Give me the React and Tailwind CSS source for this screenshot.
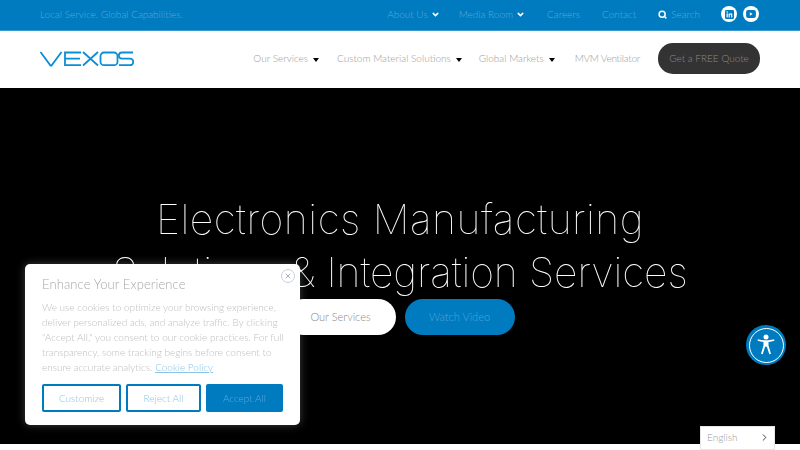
import React from 'react';
import { ChevronDown, ChevronRight, Search, X } from 'lucide-react';

function Caret() {
  return <span className="ml-[5px] mt-[2px] inline-block border-x-[3px] border-t-[4px] border-x-transparent border-t-black" />;
}

function Logo() {
  return (
    <svg width="94" height="16" viewBox="0 0 94 16" fill="none" stroke="#0a8fd6" strokeWidth="1.8">
      <path d="M0.5 1l10 13.5h1L21.5 1" />
      <path d="M41 1.5H25v12.7h16M25 7.7h15" />
      <path d="M43 1l15 13.5M58 1L43 14.5" />
      <rect x="60.5" y="1.5" width="17" height="12.7" rx="3.5" />
      <path d="M93 1.5H82a3 3 0 0 0 0 6.2h8a3.2 3.2 0 0 1 0 6.5H79" />
    </svg>
  );
}

function SocialIcon({ children }) {
  return <span className="flex h-4 w-4 items-center justify-center rounded-full bg-white">{children}</span>;
}

export default function App() {
  return (
    <div className="relative h-[450px] w-[800px] overflow-hidden bg-white font-['Lato',sans-serif] font-light">
      {/* top bar */}
      <div className="flex h-[31px] items-center justify-between border-b border-[#3a9bd2] bg-[#007bc0] pb-[2px] pl-10 pr-[41px] text-[10px] text-[#5aa9d8]">
        <span>Local Service. Global Capabilities.</span>
        <div className="flex items-center">
          <span className="flex items-center">About Us <ChevronDown size={9} strokeWidth={4} className="ml-[3px] text-white" /></span>
          <span className="ml-[19px] flex items-center">Media Room <ChevronDown size={9} strokeWidth={4} className="ml-[3px] text-white" /></span>
          <span className="ml-[22px]">Careers</span>
          <span className="ml-[22px]">Contact</span>
          <span className="ml-[22px] flex items-center"><Search size={9} strokeWidth={4} className="mr-[4px] text-white" />Search</span>
          <span className="ml-[21px]">
            <SocialIcon>
              <svg width="9" height="9" viewBox="0 0 10 10">
                <rect width="10" height="10" rx="1.5" fill="#007bc0" />
                <rect x="1.7" y="3.8" width="1.4" height="4.4" fill="white" />
                <circle cx="2.4" cy="2.3" r="0.85" fill="white" />
                <path d="M4 3.8h1.3v.6c.3-.5.8-.7 1.3-.7 1 0 1.5.6 1.5 1.8v2.7H6.8V5.8c0-.6-.2-.9-.7-.9-.5 0-.8.4-.8 1v2.3H4z" fill="white" />
              </svg>
            </SocialIcon>
          </span>
          <span className="ml-[6px]">
            <SocialIcon>
              <svg width="10" height="8" viewBox="0 0 11 9">
                <rect width="11" height="9" rx="2.2" fill="#007bc0" />
                <path d="M4.2 2.5l3 2-3 2z" fill="white" />
              </svg>
            </SocialIcon>
          </span>
        </div>
      </div>

      {/* main nav */}
      <div className="flex h-[57px] items-center justify-between pb-[2px] pl-10 pr-10">
        <Logo />
        <div className="flex items-center text-[10px] text-[#9b9b9b]">
          <span className="flex items-center">Our Services <Caret /></span>
          <span className="ml-[18px] flex items-center">Custom Material Solutions <Caret /></span>
          <span className="ml-[17px] flex items-center">Global Markets <Caret /></span>
          <span className="ml-[20px] tracking-[-0.25px]">MVM Ventilator</span>
          <span className="ml-[18px] flex h-[31px] w-[102px] items-center justify-center rounded-[15px] bg-[#333333] text-[#8a8a8a]">Get a FREE Quote</span>
        </div>
      </div>

      {/* hero */}
      <div className="flex h-[356px] flex-col items-center bg-black pt-[105px]">
        <h1 className="text-center font-['Inter',sans-serif] text-[41px] font-thin leading-[53px] tracking-[-0.1px] text-white [transform:translateZ(0)]">
          <span className="tracking-[0.5px]">Electronics Manufacturing</span><br />Solutions &amp; Integration Services
        </h1>
        <div className="flex gap-[9px]">
          <span className="flex h-9 w-[110px] items-center justify-center rounded-[18px] bg-white text-[11px] text-[#8a8a8a]">Our Services</span>
          <span className="flex h-9 w-[110px] items-center justify-center rounded-[18px] bg-[#007bc0] text-[11px] text-[#4ea3d6]">Watch Video</span>
        </div>
      </div>

      {/* cookie dialog */}
      <div className="absolute left-[25px] top-[264px] h-[161px] w-[275px] rounded-[5px] bg-white px-[17px] pt-[12px] shadow-[0_0_8px_rgba(255,255,255,0.25)]">
        <button className="absolute right-[5px] top-[5px] flex h-[14px] w-[14px] items-center justify-center rounded-full border border-[#c9cfe0] text-[#7a80a8]"><X size={8} /></button>
        <div className="text-[13px] leading-[16px] tracking-[0.1px] text-[#a8a8a8]">Enhance Your Experience</div>
        <p className="mt-[8px] whitespace-nowrap text-[10px] leading-[15px] text-[#bdbdbd]">
          We use cookies to optimize your browsing experience,<br />
          deliver personalized ads, and analyze traffic. By clicking<br />
          "Accept All," you consent to our cookie practices. For full<br />
          transparency, some tracking begins before consent to<br />
          ensure accurate analytics. <span className="text-[#8cc4e6] underline">Cookie Policy</span>
        </p>
        <div className="absolute bottom-[13px] left-[17px] flex gap-[5px] text-[10px]">
          <button className="h-[28px] w-[79px] rounded-[2px] border-2 border-[#007bc0] text-[#8cc4e6]">Customize</button>
          <button className="h-[28px] w-[75px] rounded-[2px] border-2 border-[#007bc0] text-[#8cc4e6]">Reject All</button>
          <button className="h-[28px] w-[77px] rounded-[2px] bg-[#007bc0] text-[#5aa9d8]">Accept All</button>
        </div>
      </div>

      {/* accessibility button */}
      <div className="absolute left-[746px] top-[325px] flex h-10 w-10 items-center justify-center rounded-full bg-[#007bc0]">
        <div className="flex h-[35px] w-[35px] items-center justify-center rounded-full border border-white">
          <svg width="22" height="24" viewBox="0 0 22 24" fill="white">
            <circle cx="11" cy="4" r="2.5" />
            <path d="M2.5 7.8l.5-1.6c2.8.8 5.3 1.1 8 1.1s5.2-.3 8-1.1l.5 1.6c-2 .7-4 1.1-6 1.3v3.3l2.5 8.4-1.7.5-2.4-7.6h-1.8l-2.4 7.6-1.7-.5 2.5-8.4V9.1c-2-.2-4-.6-6-1.3z" />
          </svg>
        </div>
      </div>

      {/* language picker */}
      <div className="absolute left-[700px] top-[426px] flex h-6 w-[75px] items-center justify-between border border-[#e6e6e6] bg-white pb-[2px] pl-[6px] pr-[4px] text-[10px] text-[#9b9b9b]">
        English
        <ChevronRight size={11} strokeWidth={2} className="text-[#333]" />
      </div>
    </div>
  );
}
